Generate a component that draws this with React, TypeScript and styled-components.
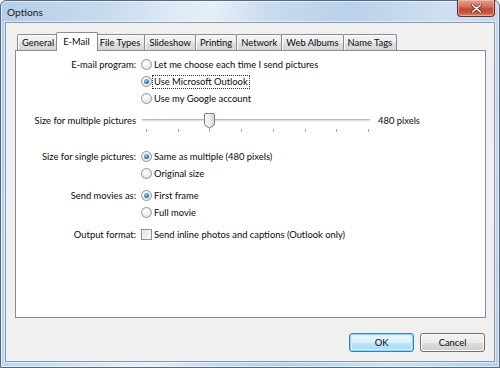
import React from 'react';
import styled, { createGlobalStyle, css } from 'styled-components';

const Global = createGlobalStyle`
  html, body { margin: 0; padding: 0; }
  body {
    width: 500px; height: 368px; overflow: hidden; background: #ffffff;
    font-family: "Lato", "Open Sans", sans-serif;
    font-size: 9.4px; color: #0a0a0a;
  }
  #root { width: 500px; height: 368px; }
`;

const Window = styled.div`
  box-sizing: border-box;
  width: 500px;
  height: 368px;
  border: 1px solid #56697f;
  border-radius: 6px 6px 0 0;
  padding: 0 4px 5px;
  display: flex;
  flex-direction: column;
  background: linear-gradient(100deg, #b4cde8 0%, #c6daef 18%, #dfeaf6 32%, #e6eef8 38%, #c8dbef 48%, #bad1ea 62%, #cfe0f2 80%, #b8cfe8 100%);
  box-shadow: inset 0 0 0 1px rgba(255, 255, 255, 0.55);
`;

const TitleBar = styled.div`
  height: 21px;
  display: flex;
  align-items: flex-start;
  justify-content: space-between;
`;

const Title = styled.span`
  padding-left: 2px;
  line-height: 22px;
  font-size: 10.2px;
  color: #1a1a1a;
`;

const CloseButton = styled.div`
  box-sizing: border-box;
  width: 38px;
  height: 17px;
  margin-top: -1px;
  border: 1px solid #6b2c26;
  border-top: none;
  border-radius: 0 0 4px 4px;
  background: linear-gradient(#e3a08f 0%, #d6735f 40%, #c44a32 55%, #c7553c 80%, #d88a6e 100%);
  box-shadow: inset 0 0 0 1px rgba(255, 220, 210, 0.45);
  display: flex;
  align-items: center;
  justify-content: center;
`;

const Client = styled.div`
  flex: 1;
  box-sizing: border-box;
  background: #f0f0f0;
  border: 1px solid #8599b0;
  box-shadow: 0 0 0 1px rgba(255, 255, 255, 0.5);
  display: flex;
  flex-direction: column;
  padding: 9px 8px 9px 9px;
`;

const TabStrip = styled.div`
  height: 18px;
  display: flex;
  align-items: flex-end;
  padding-left: 2px;
  position: relative;
  z-index: 1;
`;

const Tab = styled.div<{ $active?: boolean }>`
  box-sizing: border-box;
  height: 16px;
  padding: 0 4px;
  margin-left: -1px;
  border: 1px solid #898c95;
  border-bottom: none;
  border-radius: 2px 2px 0 0;
  line-height: 15px;
  white-space: nowrap;
  background: linear-gradient(#f4f4f4 0%, #ececec 50%, #e0e0e0 51%, #d6d6d6 100%);
  box-shadow: inset 1px 1px 0 #fcfcfc;
  &:first-child { margin-left: 0; }
  ${(p) =>
    p.$active &&
    css`
      height: 19px;
      margin: 0 -2px -1px -3px;
      padding: 1px 7px 0 6px;
      background: #ffffff;
      box-shadow: none;
      position: relative;
      z-index: 2;
    `}
`;

const Pane = styled.div`
  flex: 1;
  background: #ffffff;
  border: 1px solid #898c95;
  padding-top: 5px;
`;

const Group = styled.div<{ $gap?: number }>`
  display: grid;
  grid-template-columns: 120px auto;
  column-gap: 5px;
  margin-top: ${(p) => p.$gap ?? 0}px;
`;

const Label = styled.div`
  text-align: right;
  line-height: 17px;
  height: 17px;
  white-space: nowrap;
`;

const Options = styled.div`
  display: flex;
  flex-direction: column;
`;

const Option = styled.div`
  display: flex;
  align-items: center;
  height: 17px;
  white-space: nowrap;
`;

const Radio = styled.span<{ $checked?: boolean }>`
  box-sizing: border-box;
  width: 11px;
  height: 11px;
  border-radius: 50%;
  border: 1px solid #939393;
  background: radial-gradient(circle at 40% 35%, #ffffff 0%, #f1f1f1 40%, #d8d8d8 100%);
  display: flex;
  align-items: center;
  justify-content: center;
  flex: none;
  ${(p) =>
    p.$checked &&
    css`
      &::after {
        content: '';
        width: 5px;
        height: 5px;
        border-radius: 50%;
        background: radial-gradient(circle at 40% 35%, #a6d6f5 0%, #3a8dd0 45%, #1a4f8c 100%);
      }
    `}
`;

const Check = styled.span`
  box-sizing: border-box;
  width: 11px;
  height: 11px;
  border: 1px solid #8e8f8f;
  background: linear-gradient(135deg, #dcdcdc 0%, #f0f0f0 60%, #ffffff 100%);
  box-shadow: inset 0 0 0 1px #f4f4f4;
  flex: none;
`;

const OptionText = styled.span<{ $focused?: boolean }>`
  line-height: 12px;
  padding: 0 1px;
  border: 1px dotted transparent;
  ${(p) =>
    p.$focused &&
    css`
      border-color: #333333;
    `}
`;

const SliderRow = styled.div`
  display: flex;
  align-items: flex-start;
  gap: 5px;
  height: 20px;
`;

const SliderValue = styled.span`
  line-height: 17px;
`;

const ButtonRow = styled.div`
  display: flex;
  justify-content: flex-end;
  gap: 6px;
  margin-top: 15px;
  padding-right: 1px;
`;

const Button = styled.div<{ $default?: boolean }>`
  box-sizing: border-box;
  width: 65px;
  height: 19px;
  border-radius: 3px;
  border: 1px solid #707070;
  background: linear-gradient(#f2f2f2 0%, #ebebeb 50%, #dddddd 51%, #cfcfcf 100%);
  box-shadow: inset 0 0 0 1px #fbfbfb;
  display: flex;
  align-items: center;
  justify-content: center;
  ${(p) =>
    p.$default &&
    css`
      border-color: #3c7fb1;
      background: linear-gradient(#eaf6fd 0%, #d9f0fc 50%, #bee6fd 51%, #a7d9f5 100%);
      box-shadow: inset 0 0 0 1px #8fd3f5, inset 0 0 0 2px #d6f0fc;
    `}
`;

const ticks = Array.from({ length: 8 }, (_, i) => 5 + (i * 222) / 7);

function Slider() {
  return (
    <svg width="232" height="20" viewBox="0 0 232 20">
      <defs>
        <linearGradient id="thumb" x1="0" x2="1" y1="0" y2="0">
          <stop offset="0" stopColor="#fafafa" />
          <stop offset="0.5" stopColor="#ececec" />
          <stop offset="1" stopColor="#d4d4d4" />
        </linearGradient>
      </defs>
      <rect x="1" y="7" width="228" height="1" fill="#b9b9b9" />
      <rect x="1" y="8" width="228" height="1" fill="#e2e2e2" />
      <rect x="1" y="9" width="228" height="1" fill="#f6f6f6" />
      {ticks.map((x) => (
        <rect key={x} x={Math.round(x)} y="17" width="1" height="3" fill="#a3a3a3" />
      ))}
      <path
        d="M63.5 3 Q63.5 1.5 65 1.5 H72 Q73.5 1.5 73.5 3 V11.5 Q73.5 13 72 14 L68.5 16 L65 14 Q63.5 13 63.5 11.5 Z"
        fill="url(#thumb)"
        stroke="#7b7b7b"
        strokeWidth="1"
      />
    </svg>
  );
}

export default function App() {
  const tabs = ['General', 'E-Mail', 'File Types', 'Slideshow', 'Printing', 'Network', 'Web Albums', 'Name Tags'];
  return (
    <>
      <Global />
      <Window>
        <TitleBar>
          <Title>Options</Title>
          <CloseButton>
            <svg width="11" height="9" viewBox="0 0 11 9">
              <path d="M1.5 1 L9.5 8 M9.5 1 L1.5 8" stroke="#6a2a22" strokeWidth="3" strokeLinecap="round" />
              <path d="M1.5 1 L9.5 8 M9.5 1 L1.5 8" stroke="#ffffff" strokeWidth="1.6" strokeLinecap="round" />
            </svg>
          </CloseButton>
        </TitleBar>
        <Client>
          <TabStrip>
            {tabs.map((t) => (
              <Tab key={t} $active={t === 'E-Mail'}>
                {t}
              </Tab>
            ))}
          </TabStrip>
          <Pane>
            <Group>
              <Label>E-mail program:</Label>
              <Options>
                <Option>
                  <Radio />
                  <OptionText>Let me choose each time I send pictures</OptionText>
                </Option>
                <Option>
                  <Radio $checked />
                  <OptionText $focused>Use Microsoft Outlook</OptionText>
                </Option>
                <Option>
                  <Radio />
                  <OptionText>Use my Google account</OptionText>
                </Option>
              </Options>
            </Group>
            <Group $gap={5}>
              <Label>Size for multiple pictures</Label>
              <SliderRow>
                <Slider />
                <SliderValue>480 pixels</SliderValue>
              </SliderRow>
            </Group>
            <Group $gap={16}>
              <Label>Size for single pictures:</Label>
              <Options>
                <Option>
                  <Radio $checked />
                  <OptionText>Same as multiple (480 pixels)</OptionText>
                </Option>
                <Option>
                  <Radio />
                  <OptionText>Original size</OptionText>
                </Option>
              </Options>
            </Group>
            <Group $gap={5}>
              <Label>Send movies as:</Label>
              <Options>
                <Option>
                  <Radio $checked />
                  <OptionText>First frame</OptionText>
                </Option>
                <Option>
                  <Radio />
                  <OptionText>Full movie</OptionText>
                </Option>
              </Options>
            </Group>
            <Group $gap={5}>
              <Label>Output format:</Label>
              <Options>
                <Option>
                  <Check />
                  <OptionText>Send inline photos and captions (Outlook only)</OptionText>
                </Option>
              </Options>
            </Group>
          </Pane>
          <ButtonRow>
            <Button $default>OK</Button>
            <Button>Cancel</Button>
          </ButtonRow>
        </Client>
      </Window>
    </>
  );
}
